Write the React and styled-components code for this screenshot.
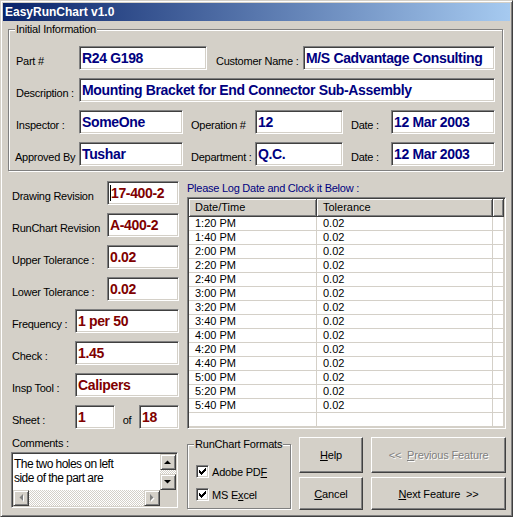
import React from "react";
import styled, { createGlobalStyle, css } from "styled-components";

const GlobalStyle = createGlobalStyle`
    html, body {
        margin: 0;
        padding: 0;
        background: #d4d0c8;
    }
    body {
        font-family: "Liberation Sans", Arial, sans-serif;
        font-size: 11px;
        color: #000;
    }
`;

const sunken = css`
    background: #fff;
    border: 1px solid;
    border-color: #808080 #fff #fff #808080;
    box-shadow: inset 1px 1px 0 #404040, inset -1px -1px 0 #d4d0c8;
`;

const raised = css`
    background: #d4d0c8;
    border: 1px solid;
    border-color: #fff #404040 #404040 #fff;
    box-shadow: inset -1px -1px 0 #808080;
`;

const Window = styled.div`
    width: 513px;
    height: 517px;
    box-sizing: border-box;
    background: #d4d0c8;
    border: 1px solid;
    border-color: #d4d0c8 #404040 #404040 #d4d0c8;
    box-shadow: inset 1px 1px 0 #fff, inset -1px -1px 0 #808080;
    padding: 2px;
    display: flex;
    flex-direction: column;
`;

const TitleBar = styled.div`
    height: 18px;
    flex-shrink: 0;
    background: linear-gradient(to right, #0a246a, #a6caf0);
    color: #fff;
    font-weight: bold;
    font-size: 12px;
    display: flex;
    align-items: center;
    padding-left: 2px;
`;

const Client = styled.div`
    flex: 1;
    display: flex;
    flex-direction: column;
    padding-top: 8px;
`;

const GroupBox = styled.div`
    position: relative;
    box-sizing: border-box;
    border: 1px solid #808080;
    box-shadow: inset 1px 1px 0 #fff, 1px 1px 0 #fff;
`;

const InfoGroup = styled(GroupBox)`
    margin: 0 7px 0 5px;
    padding: 16px 0 4px 6px;
`;

const GroupCaption = styled.span`
    position: absolute;
    top: -7px;
    left: 6px;
    padding: 0 1px;
    line-height: 13px;
    background: #d4d0c8;
    letter-spacing: -0.2px;
`;

const InfoRows = styled.div`
    display: flex;
    flex-direction: column;
    gap: 8px;
`;

const Row = styled.div`
    display: flex;
    align-items: center;
    height: 24px;
`;

const Label = styled.span`
    width: ${(p) => p.$w}px;
    padding-left: ${(p) => p.$pl || 0}px;
    box-sizing: border-box;
    flex-shrink: 0;
    margin-top: 6px;
    white-space: nowrap;
    letter-spacing: -0.25px;
    text-align: ${(p) => (p.$center ? "center" : "left")};
`;

const TextBox = styled.div`
    ${sunken};
    width: ${(p) => p.$w}px;
    height: 24px;
    box-sizing: border-box;
    flex-shrink: 0;
    padding: 3px 2px 0 2px;
    font-weight: bold;
    font-size: 14px;
    line-height: 16px;
    letter-spacing: -0.35px;
    color: ${(p) => (p.$tone === "red" ? "#800000" : "#000080")};
    white-space: nowrap;
    overflow: hidden;
`;

const Caret = styled.span`
    display: inline-block;
    width: 1px;
    height: 16px;
    background: #000;
    vertical-align: top;
`;

const Lower = styled.div`
    display: grid;
    grid-template-columns: 184px 1fr;
    grid-template-rows: 248px auto;
    row-gap: 8px;
    margin-top: 10px;
    padding-right: 4px;
`;

const FieldList = styled.div`
    display: flex;
    flex-direction: column;
    gap: 8px;
    padding-left: 9px;
`;

const LogPanel = styled.div`
    display: flex;
    flex-direction: column;
`;

const LogCaption = styled.div`
    color: #000080;
    line-height: 14px;
    letter-spacing: -0.25px;
`;

const ListView = styled.div`
    ${sunken};
    margin-top: 2px;
    height: 232px;
    box-sizing: border-box;
    padding: 1px;
    overflow: hidden;
`;

const ListGrid = styled.div`
    display: grid;
    grid-template-columns: 128px 176px 1fr;
`;

const HeaderCell = styled.div`
    height: 18px;
    box-sizing: border-box;
    background: #d4d0c8;
    border-right: 1px solid #404040;
    border-bottom: 1px solid #404040;
    box-shadow: inset 1px 1px 0 #fff, inset -1px -1px 0 #808080;
    padding-left: 6px;
    line-height: 17px;
    white-space: nowrap;
`;

const Cell = styled.div`
    height: 14px;
    box-sizing: border-box;
    border-right: 1px solid #d4d0c8;
    border-bottom: 1px solid #d4d0c8;
    padding-left: 6px;
    line-height: 13px;
    white-space: nowrap;
`;

const CommentsPanel = styled.div`
    display: flex;
    flex-direction: column;
`;

const CommentsLabel = styled.div`
    padding-left: 9px;
    line-height: 13px;
    letter-spacing: -0.25px;
`;

const Memo = styled.div`
    ${sunken};
    margin: 2px 0 0 8px;
    width: 167px;
    height: 56px;
    box-sizing: border-box;
    padding: 1px;
    display: grid;
    grid-template-columns: 1fr 16px;
    grid-template-rows: 1fr 16px;
`;

const MemoText = styled.div`
    padding: 3px 0 0 1px;
    font-size: 12px;
    line-height: 14px;
    letter-spacing: -0.55px;
    overflow: hidden;
`;

const VScroll = styled.div`
    display: flex;
    flex-direction: column;
`;

const HScroll = styled.div`
    display: flex;
`;

const Track = styled.div`
    flex: 1;
    background: repeating-conic-gradient(#d4d0c8 0 25%, #fff 0 50%) 0 0 / 2px 2px;
`;

const ScrollButton = styled.div`
    width: 16px;
    height: 16px;
    box-sizing: border-box;
    background: #d4d0c8;
    border: 1px solid;
    border-color: #d4d0c8 #404040 #404040 #d4d0c8;
    box-shadow: inset 1px 1px 0 #fff, inset -1px -1px 0 #808080;
    display: flex;
    align-items: center;
    justify-content: center;
    flex-shrink: 0;
`;

const Corner = styled.div`
    background: #d4d0c8;
`;

const ActionRow = styled.div`
    display: flex;
    align-items: flex-start;
`;

const FormatsGroup = styled(GroupBox)`
    margin-top: 7px;
    width: 104px;
    height: 65px;
    padding: 20px 0 0 8px;
    display: flex;
    flex-direction: column;
    gap: 10px;
`;

const CheckRow = styled.label`
    display: flex;
    align-items: center;
    gap: 3px;
    height: 13px;
    letter-spacing: -0.2px;
`;

const CheckBox = styled.span`
    ${sunken};
    width: 13px;
    height: 13px;
    box-sizing: border-box;
    display: inline-flex;
    align-items: center;
    justify-content: center;
    flex-shrink: 0;
`;

const ButtonColumn = styled.div`
    display: flex;
    flex-direction: column;
    gap: 4px;
    margin-left: 8px;
`;

const Button = styled.button`
    ${raised};
    width: ${(p) => p.$w}px;
    height: ${(p) => p.$h}px;
    padding: 0;
    font-family: "Liberation Sans", Arial, sans-serif;
    font-size: 11px;
    letter-spacing: -0.15px;
    color: #000;
    white-space: pre;
    ${(p) =>
        p.disabled &&
        css`
            color: #808080;
            text-shadow: 1px 1px 0 #fff;
        `}
`;

// classic 7x7 check glyph, one rect per pixel run
const checkRuns = [
    [6, 0, 1], [5, 1, 2], [0, 2, 1], [4, 2, 3],
    [0, 3, 2], [3, 3, 3], [0, 4, 5], [1, 5, 3], [2, 6, 1],
];

const CheckMark = () => (
    <svg width="7" height="7" viewBox="0 0 7 7" shapeRendering="crispEdges">
        {checkRuns.map(([x, y, w], i) => (
            <rect key={i} x={x} y={y} width={w} height={1} fill="#000" />
        ))}
    </svg>
);

const Arrow = ({ dir, muted }) => {
    const shapes = {
        up: "0,4 7,4 3.5,0.5",
        down: "0,0 7,0 3.5,3.5",
        left: "4,0 4,7 0.5,3.5",
        right: "0,0 0,7 3.5,3.5",
    };
    const vertical = dir === "up" || dir === "down";
    const w = vertical ? 7 : 4;
    const h = vertical ? 4 : 7;
    return (
        <svg width={w + 1} height={h + 1} viewBox={`0 0 ${w + 1} ${h + 1}`}>
            {muted && (
                <polygon
                    points={shapes[dir]}
                    fill="#fff"
                    transform="translate(1 1)"
                />
            )}
            <polygon points={shapes[dir]} fill={muted ? "#808080" : "#000"} />
        </svg>
    );
};

const logTimes = [
    "1:20 PM", "1:40 PM", "2:00 PM", "2:20 PM", "2:40 PM", "3:00 PM", "3:20 PM",
    "3:40 PM", "4:00 PM", "4:20 PM", "4:40 PM", "5:00 PM", "5:20 PM", "5:40 PM",
];

const sideFields = [
    { label: "Drawing Revision", lw: 95, iw: 72, value: "17-400-2", caret: true },
    { label: "RunChart Revision", lw: 95, iw: 72, value: "A-400-2" },
    { label: "Upper Tolerance :", lw: 95, iw: 72, value: "0.02" },
    { label: "Lower Tolerance :", lw: 95, iw: 72, value: "0.02" },
    { label: "Frequency :", lw: 63, iw: 104, value: "1 per 50" },
    { label: "Check :", lw: 63, iw: 104, value: "1.45" },
    { label: "Insp Tool :", lw: 63, iw: 104, value: "Calipers" },
];

const App = () => {
    return (
        <>
            <GlobalStyle />
            <Window>
                <TitleBar>EasyRunChart v1.0</TitleBar>
                <Client>
                    <InfoGroup>
                        <GroupCaption>Initial Information</GroupCaption>
                        <InfoRows>
                            <Row>
                                <Label $w={64} $pl={1}>Part #</Label>
                                <TextBox $w={128}>R24 G198</TextBox>
                                <Label $w={96} $pl={9}>Customer Name :</Label>
                                <TextBox $w={192}>M/S Cadvantage Consulting</TextBox>
                            </Row>
                            <Row>
                                <Label $w={64} $pl={1}>Description :</Label>
                                <TextBox $w={416}>
                                    Mounting Bracket for End Connector Sub-Assembly
                                </TextBox>
                            </Row>
                            <Row>
                                <Label $w={64} $pl={1}>Inspector :</Label>
                                <TextBox $w={104}>SomeOne</TextBox>
                                <Label $w={72} $pl={8}>Operation #</Label>
                                <TextBox $w={88}>12</TextBox>
                                <Label $w={48} $pl={8}>Date :</Label>
                                <TextBox $w={104}>12 Mar 2003</TextBox>
                            </Row>
                            <Row>
                                <Label $w={64}>Approved By</Label>
                                <TextBox $w={104}>Tushar</TextBox>
                                <Label $w={72} $pl={8}>Department :</Label>
                                <TextBox $w={88}>Q.C.</TextBox>
                                <Label $w={48} $pl={8}>Date :</Label>
                                <TextBox $w={104}>12 Mar 2003</TextBox>
                            </Row>
                        </InfoRows>
                    </InfoGroup>

                    <Lower>
                        <FieldList>
                            {sideFields.map((f) => (
                                <Row key={f.label}>
                                    <Label $w={f.lw}>{f.label}</Label>
                                    <TextBox $w={f.iw} $tone="red">
                                        {f.caret && <Caret />}
                                        {f.value}
                                    </TextBox>
                                </Row>
                            ))}
                            <Row>
                                <Label $w={63}>Sheet :</Label>
                                <TextBox $w={40} $tone="red">1</TextBox>
                                <Label $w={24} $center>of</Label>
                                <TextBox $w={40} $tone="red">18</TextBox>
                            </Row>
                        </FieldList>

                        <LogPanel>
                            <LogCaption>Please Log Date and Clock it Below :</LogCaption>
                            <ListView>
                                <ListGrid>
                                    <HeaderCell>Date/Time</HeaderCell>
                                    <HeaderCell>Tolerance</HeaderCell>
                                    <HeaderCell />
                                    {[...logTimes, ""].map((t, i) => (
                                        <React.Fragment key={i}>
                                            <Cell>{t}</Cell>
                                            <Cell>{t ? "0.02" : ""}</Cell>
                                            <Cell />
                                        </React.Fragment>
                                    ))}
                                </ListGrid>
                            </ListView>
                        </LogPanel>

                        <CommentsPanel>
                            <CommentsLabel>Comments :</CommentsLabel>
                            <Memo>
                                <MemoText>
                                    The two holes on left
                                    <br />
                                    side of the part are
                                </MemoText>
                                <VScroll>
                                    <ScrollButton>
                                        <Arrow dir="up" />
                                    </ScrollButton>
                                    <Track />
                                    <ScrollButton>
                                        <Arrow dir="down" />
                                    </ScrollButton>
                                </VScroll>
                                <HScroll>
                                    <ScrollButton>
                                        <Arrow dir="left" muted />
                                    </ScrollButton>
                                    <Track />
                                    <ScrollButton>
                                        <Arrow dir="right" muted />
                                    </ScrollButton>
                                </HScroll>
                                <Corner />
                            </Memo>
                        </CommentsPanel>

                        <ActionRow>
                            <FormatsGroup>
                                <GroupCaption>RunChart Formats</GroupCaption>
                                <CheckRow>
                                    <CheckBox>
                                        <CheckMark />
                                    </CheckBox>
                                    <span>
                                        Adobe PD<u>F</u>
                                    </span>
                                </CheckRow>
                                <CheckRow>
                                    <CheckBox>
                                        <CheckMark />
                                    </CheckBox>
                                    <span>
                                        MS E<u>x</u>cel
                                    </span>
                                </CheckRow>
                            </FormatsGroup>
                            <ButtonColumn>
                                <Button $w={64} $h={36}>
                                    <u>H</u>elp
                                </Button>
                                <Button $w={64} $h={33}>
                                    <u>C</u>ancel
                                </Button>
                            </ButtonColumn>
                            <ButtonColumn>
                                <Button $w={135} $h={36} disabled>
                                    {"<<  "}
                                    <u>P</u>
                                    {"revious Feature"}
                                </Button>
                                <Button $w={135} $h={33}>
                                    <u>N</u>
                                    {"ext Feature  >>"}
                                </Button>
                            </ButtonColumn>
                        </ActionRow>
                    </Lower>
                </Client>
            </Window>
        </>
    );
};

export default App;
